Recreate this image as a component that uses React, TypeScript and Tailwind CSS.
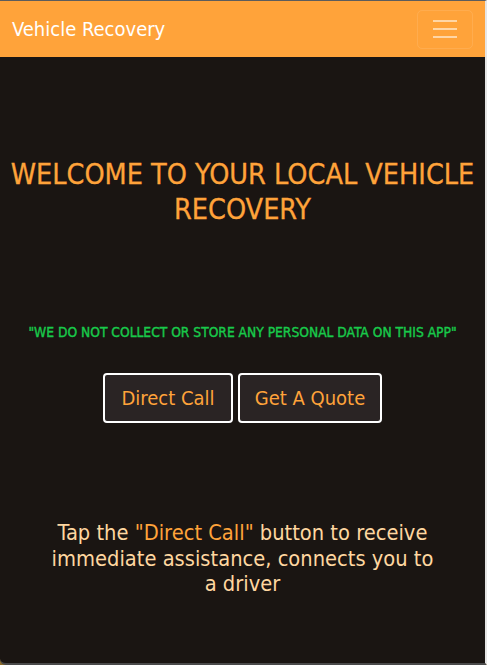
// single-page vehicle recovery landing
const font = "font-['DejaVu_Sans_Condensed','DejaVu_Sans',sans-serif]";

const Navbar = () => {
  return (
    <nav className="h-[56px] bg-[#ffa33a] flex items-center justify-between pl-[12px] pr-[12px]">
      <span className="text-white text-[20px] leading-none">Vehicle Recovery</span>
      {/* toggler */}
      <button className="w-[56px] h-[39px] rounded-[5px] border border-white/10 flex flex-col items-center justify-center gap-[6px]">
        <span className="block w-[24px] h-[2px] bg-white/55"></span>
        <span className="block w-[24px] h-[2px] bg-white/55"></span>
        <span className="block w-[24px] h-[2px] bg-white/55"></span>
      </button>
    </nav>
  );
};

export default function App() {
  return (
    <div className="bg-[#8a6a2a] h-[665px] w-[487px]">
      <div
        className={`h-[665px] w-[487px] bg-[#1a1512] border-t border-t-[#5c5c5c] border-r-2 border-r-[#e6e6e6] border-b-2 border-b-[#4a4a4a] rounded-bl-[6px] overflow-hidden ${font}`}
      >
        <Navbar />
        <main className="flex flex-col items-center text-center">
          <h1 className="mt-[100px] w-[485px] text-[28.5px] leading-[35px] text-[#ffa33a] font-normal [-webkit-text-stroke:0.3px_#ffa33a]">
            WELCOME TO YOUR LOCAL VEHICLE RECOVERY
          </h1>
          <p className="mt-[95px] text-[13.7px] leading-[20px] font-normal [-webkit-text-stroke:0.4px_#18c94a] text-[#18c94a]">
            "WE DO NOT COLLECT OR STORE ANY PERSONAL DATA ON THIS APP"
          </p>
          <div className="mt-[31px] flex gap-[5px]">
            <button className="w-[130px] h-[50px] rounded-[4px] border-2 border-white bg-[#2a2424] text-[#ffa33a] text-[20px]">
              Direct Call
            </button>
            <button className="w-[144px] h-[50px] rounded-[4px] border-2 border-white bg-[#2a2424] text-[#ffa33a] text-[20px]">
              Get A Quote
            </button>
          </div>
          <p className="mt-[97px] w-[385px] text-[21.7px] leading-[25.5px] text-[#ffd7a0]">
            Tap the <span className="text-[#ffa33a]">"Direct Call"</span> button to receive immediate assistance,
            connects you to a driver
          </p>
        </main>
      </div>
    </div>
  );
}
